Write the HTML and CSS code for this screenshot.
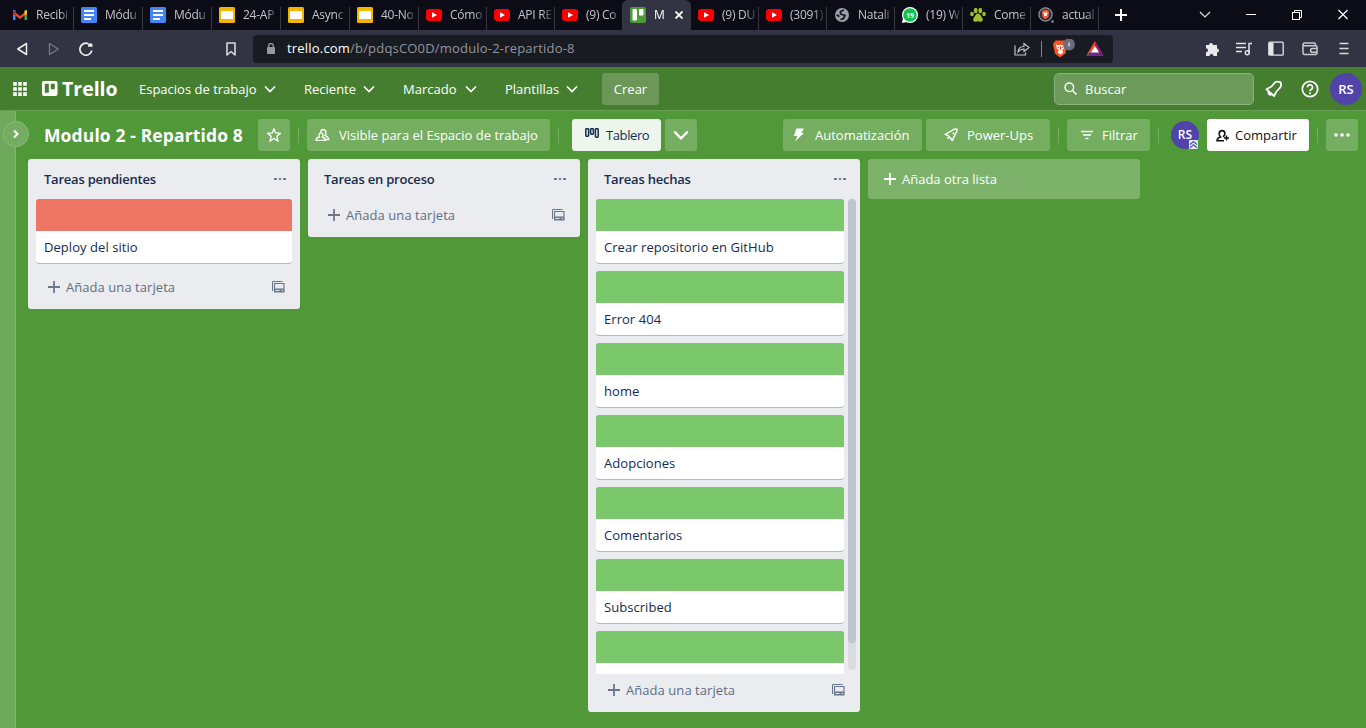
FILE: index.html
```html
<!DOCTYPE html>
<html lang="es">
<head>
<meta charset="utf-8">
<title>Modulo 2 - Repartido 8 | Trello</title>
<link rel="stylesheet" href="styles.css">
</head>
<body>
<svg class="defs" width="0" height="0">
  <symbol id="doc" viewBox="0 0 16 16"><rect width="16" height="16" rx="1.5" fill="#4285f4"/><path d="M3 4h10M3 8h10M3 12h7" stroke="#fff" stroke-width="1.8"/></symbol>
  <symbol id="slide" viewBox="0 0 16 16"><rect width="16" height="16" rx="1.5" fill="#f5b400"/><rect x="2" y="4" width="12" height="8" fill="#fff"/></symbol>
  <symbol id="yt" viewBox="0 0 16 16"><rect y="2" width="16" height="12" rx="3" fill="#f00"/><path d="M6 5.300v5.400L11 8z" fill="#fff"/></symbol>
  <symbol id="chev" viewBox="0 0 12 12"><path d="M1 3.500l5 5 5-5" fill="none" stroke="currentColor" stroke-width="1.7"/></symbol>
  <symbol id="plus" viewBox="0 0 12 12"><path d="M6 0v12M0 6h12" stroke="currentColor" stroke-width="1.8"/></symbol>
  <symbol id="template" viewBox="0 0 13 12"><path d="M.5 10V.5H10.500" fill="none" stroke="currentColor"/><path d="M2.500 2.500h9.500v8.500H2.500z" fill="none" stroke="currentColor" stroke-width="1.200"/><path d="M2.500 7.500h9.500v3.500h-9.500z" fill="currentColor"/><path d="M3.500 9.500h4M9.500 9.500h1.500" stroke="#ebecf0" stroke-width="1"/></symbol>
  <symbol id="rocket" viewBox="0 0 16 16"><path d="M1.300 7.200L9 3Q12 .8 14.700 1.300Q15.200 4 13 7L9.500 14.200L6.800 10.800L5.200 9z M10 5.500l1.500 1.500M6.300 9.800L3.800 12.200" fill="none" stroke="currentColor" stroke-width="1.700" stroke-linejoin="round"/></symbol>
</svg>

<div class="tabs">
  <div class="tab"><svg width="16" height="16" viewBox="0 0 16 16"><path d="M1 13V3h2.500v10z" fill="#4285f4"/><path d="M12.500 3H15v10h-2.500z" fill="#34a853"/><path d="M1 3.500l7 5.500 7-5.500v3.300L8 12 1 6.800z" fill="#ea4335"/><path d="M12.500 4.500L15 3v4l-2.500 1.500z" fill="#fbbc04"/><path d="M1 3l2.500 1.500v4L1 7z" fill="#c5221f"/></svg><span>Recibi</span></div>
  <div class="tab"><svg width="16" height="16"><use href="#doc"/></svg><span>Módu</span></div>
  <div class="tab"><svg width="16" height="16"><use href="#doc"/></svg><span>Módu</span></div>
  <div class="tab"><svg width="16" height="16"><use href="#slide"/></svg><span>24-AP</span></div>
  <div class="tab"><svg width="16" height="16"><use href="#slide"/></svg><span>Async</span></div>
  <div class="tab"><svg width="16" height="16"><use href="#slide"/></svg><span>40-No</span></div>
  <div class="tab narrow"><svg width="16" height="16"><use href="#yt"/></svg><span>Cómo</span></div>
  <div class="tab narrow"><svg width="16" height="16"><use href="#yt"/></svg><span>API RE</span></div>
  <div class="tab narrow last"><svg width="16" height="16"><use href="#yt"/></svg><span>(9) Co</span></div>
  <div class="tab active"><svg width="16" height="16" viewBox="0 0 16 16"><rect width="16" height="16" rx="2" fill="#519839"/><rect x="2.500" y="2" width="4.500" height="11.500" rx="1" fill="#fff"/><rect x="9" y="2" width="4.500" height="6.500" rx="1" fill="#fff"/></svg><span>M</span><svg class="close" width="8" height="8" viewBox="0 0 8 8"><path d="M.5.5l7 7M7.500.5l-7 7" stroke="#fff" stroke-width="1.800"/></svg></div>
  <div class="tab narrow"><svg width="16" height="16"><use href="#yt"/></svg><span>(9) DU</span></div>
  <div class="tab narrow"><svg width="16" height="16"><use href="#yt"/></svg><span>(3091)</span></div>
  <div class="tab narrow"><svg width="16" height="16" viewBox="0 0 16 16"><circle cx="8" cy="8" r="7" fill="#9aa0a6"/><path d="M10 3L6.500 4.500 6.500 7l4.500 1.500L9.500 11.500 6.500 12.500M2.500 8l3 1.500" fill="none" stroke="#11121c" stroke-width="1.700"/></svg><span>Natali</span></div>
  <div class="tab narrow"><svg width="16" height="16" viewBox="0 0 16 16"><circle cx="8" cy="8" r="8" fill="#fff"/><path d="M0 16l1-5 4 4z" fill="#fff"/><circle cx="8" cy="8" r="6.800" fill="#12c04c"/><text x="8" y="10.800" class="badge-text">19</text></svg><span>(19) W</span></div>
  <div class="tab narrow"><svg width="16" height="16" viewBox="0 0 16 16" fill="#a4bd2c"><path d="M8 6.500c2 0 2.500 2 4 4s1 4-1 4.300c-1 .2-2-.5-3-.5s-2 .7-3 .5c-2-.3-2.500-2.300-1-4.300s2-4 4-4z"/><ellipse cx="5.700" cy="3.500" rx="1.900" ry="2.700"/><ellipse cx="10.300" cy="3.500" rx="1.900" ry="2.700"/><ellipse cx="2" cy="7" rx="1.800" ry="2.300"/><ellipse cx="14" cy="7" rx="1.800" ry="2.300"/></svg><span>Come</span></div>
  <div class="tab narrow"><svg width="16" height="16" viewBox="0 0 16 16"><circle cx="7.500" cy="7.500" r="6.600" fill="#303039" stroke="#9599a2" stroke-width="1.200"/><path d="M3.800 5l1.700-2h4l1.700 2-.8 5-2.900 2.300L4.600 10z" fill="#f25a35"/><path d="M5.300 5.500h4.400L8.500 9h-2z" fill="#fff"/><circle cx="14.500" cy="14.500" r="1.200" fill="#9599a2"/></svg><span>actual</span></div>
  <svg class="newtab" width="12" height="12" viewBox="0 0 12 12"><path d="M6 0v12M0 6h12" stroke="#fff" stroke-width="2"/></svg>
  <div class="window-controls">
    <svg width="12" height="12" viewBox="0 0 12 12"><path d="M1 3l5 5 5-5" fill="none" stroke="#ddd" stroke-width="1.200"/></svg>
    <svg width="12" height="12" viewBox="0 0 12 12"><path d="M1 5.500h10" stroke="#fff"/></svg>
    <svg width="12" height="12" viewBox="0 0 12 12" fill="none" stroke="#fff"><rect x="1.500" y="3.500" width="7" height="7"/><path d="M3.500 3.500v-2h7v7h-2"/></svg>
    <svg width="12" height="12" viewBox="0 0 12 12"><path d="M1.500 1l9 9M10.500 1l-9 9" stroke="#fff" stroke-width="1.200"/></svg>
  </div>
</div>

<div class="toolbar">
  <svg width="12" height="14" viewBox="0 0 12 14"><path d="M9.500 1.500v11L.8 7z" fill="none" stroke="#eee" stroke-width="1.500" stroke-linejoin="round"/></svg>
  <svg class="forward" width="12" height="14" viewBox="0 0 12 14"><path d="M1.500 1.500v11L10.200 7z" fill="none" stroke="#777984" stroke-width="1.300" stroke-linejoin="round"/></svg>
  <svg class="reload" width="14" height="14" viewBox="0 0 14 14"><path d="M9.500 1.800A6 6 0 1 0 12.800 8.500" fill="none" stroke="#eee" stroke-width="1.700"/><path d="M8.500 4.500a2.300 2.300 0 1 1 4.600 0v1.300H8.500z" fill="#eee" transform="translate(.5 -1)"/></svg>
  <svg class="bookmark" width="12" height="14" viewBox="0 0 12 14"><path d="M2 1h8v12L6 9.500 2 13z" fill="none" stroke="#d8d9dd" stroke-width="1.600" stroke-linejoin="round"/></svg>
  <div class="address">
    <svg width="10" height="12" viewBox="0 0 10 12"><rect x="0" y="4" width="8" height="7" rx="1" fill="#9498a2"/><path d="M1.700 4.500V2.800a2.300 2.300 0 0 1 4.600 0v1.700" fill="none" stroke="#9498a2" stroke-width="1.300"/></svg>
    <span class="url"><b>trello.com</b>/b/pdqsCO0D/modulo-2-repartido-8</span>
    <svg class="share" width="16" height="14" viewBox="0 0 16 14"><path d="M1 3.500v9.500h10.500V10.500" fill="none" stroke="#c3c5ca" stroke-width="1.200"/><path d="M4 10c.3-4 2.500-5.500 6-5.500V1.500L15 5.500l-5 4V7C7.500 7 5.500 8 4 10z" fill="none" stroke="#c3c5ca" stroke-width="1.200"/></svg>
    <i></i>
    <svg class="brave" width="22" height="20" viewBox="0 0 22 20"><path d="M0 5l2.500-3.500h9L14 5l-1.500 9.500L7 18.500l-5-4z" fill="#fb5420"/><path d="M3 5.500l3 1 1.500-1 1.500 1 2.500-1-.8 4-1.500 1.500 1 2.500-2.700 2-2.700-2 1-2.500L3.800 9.500z" fill="#fff"/><path d="M4.500 8l2 1M10.500 8l-2 1M7.500 7v4" stroke="#fb5420"/><circle cx="16" cy="5.500" r="6" fill="#686d7c"/><path d="M16 3.500v4" stroke="#fff"/></svg>
    <svg class="bat" width="18" height="16" viewBox="0 0 18 16"><path d="M9 0l9 15-9-8z" fill="#9e1f63"/><path d="M0 15h18l-5-4H5z" fill="#662d91"/><path d="M0 15L9 0v5.500L5 11z" fill="#ff4724"/><path d="M9 5l4.200 6.500H4.800z" fill="#fff"/></svg>
  </div>
  <div class="extensions">
    <svg width="16" height="16" viewBox="0 0 16 16"><path d="M2 4h3a2 2 0 1 1 4 0h4v3.500a2 2 0 1 1 0 4V15H9.500a2 2 0 1 0-4 0H2v-3.800a2 2 0 1 0 0-4z" fill="#e9e9ec"/></svg>
    <svg width="16" height="16" viewBox="0 0 16 16"><path d="M0 2.500h10M0 6.500h10M0 10.500h6M13 12V2.500h3" fill="none" stroke="#e3e4e7" stroke-width="1.500"/><circle cx="11.300" cy="11.700" r="2" fill="none" stroke="#e3e4e7" stroke-width="1.400"/></svg>
    <svg width="16" height="16" viewBox="0 0 16 16"><rect x=".8" y="1.200" width="14.400" height="13" rx="1" fill="none" stroke="#e3e4e7" stroke-width="1.300"/><path d="M1 1.500h4.500v12.500H1z" fill="#e3e4e7"/></svg>
    <svg width="16" height="16" viewBox="0 0 16 16" fill="none" stroke="#c9cad0" stroke-width="1.500"><path d="M13.500 4.800V3.500a1.500 1.500 0 0 0-1.500-1.500H2.500a1.400 1.400 0 0 0 0 2.800H13.500a1.500 1.500 0 0 1 1.500 1.500v5.700a1.500 1.500 0 0 1-1.500 1.500H2.500A1.500 1.500 0 0 1 1 12V3.500"/><path d="M15 7.500h-4.500a1.900 1.900 0 0 0 0 3.800H15"/></svg>
    <svg width="16" height="16" viewBox="0 0 16 16"><path d="M3.500 2.500h9M3.500 7.500h9M3.500 12.500h9" stroke="#d9dade" stroke-width="1.600"/></svg>
  </div>
</div>

<header class="header">
  <svg class="apps" width="14" height="14" viewBox="0 0 14 14"><path d="M2 0v14M7 0v14M12 0v14" stroke="#fff" stroke-width="3.600" stroke-dasharray="3.700 1.450"/></svg>
  <div class="logo"><svg width="16" height="15" viewBox="0 0 16 15"><path fill="#fff" fill-rule="evenodd" d="M2 0h11.500a2 2 0 0 1 2 2v11a2 2 0 0 1-2 2H2a2 2 0 0 1-2-2V2a2 2 0 0 1 2-2zM2.800 2.800v9h4v-9zM8.800 2.800v5.500h4V2.800z"/></svg><span>Trello</span></div>
  <nav>
    <a class="n1">Espacios de trabajo<svg width="12" height="12"><use href="#chev"/></svg></a>
    <a class="n2">Reciente<svg width="12" height="12"><use href="#chev"/></svg></a>
    <a class="n3">Marcado<svg width="12" height="12"><use href="#chev"/></svg></a>
    <a class="n4">Plantillas<svg width="12" height="12"><use href="#chev"/></svg></a>
  </nav>
  <button class="create">Crear</button>
  <div class="search"><svg width="13" height="13" viewBox="0 0 13 13"><circle cx="5.300" cy="5.300" r="4.300" fill="none" stroke="#fff" stroke-width="1.400"/><path d="M8.500 8.500l4 4" stroke="#fff" stroke-width="1.500"/></svg><span>Buscar</span></div>
  <svg class="bell" width="18" height="18" viewBox="0 0 18 18"><path d="M1.500 9.300L6.500 6.500 10 2.500Q12 1 15.500 2.200Q17 6 14.800 8L11.500 11.500 9 16zM1.500 9.300L9 16M3.600 12a2 2 0 0 0 2.600 2.600" fill="none" stroke="#fff" stroke-width="1.800" stroke-linejoin="round"/></svg>
  <svg class="help" width="18" height="18" viewBox="0 0 18 18"><circle cx="9" cy="9" r="7.700" fill="none" stroke="#fff" stroke-width="1.700"/><path d="M6.500 7.300a2.500 2.500 0 1 1 3.700 2.200Q9 10.100 9 11.200" fill="none" stroke="#fff" stroke-width="1.600"/><circle cx="9" cy="13.200" r="1.050" fill="#fff"/></svg>
  <div class="avatar">RS</div>
</header>

<main class="board">
  <aside><button><svg width="6" height="8" viewBox="0 0 6 8"><path d="M1 .5L4.500 4 1 7.500" fill="none" stroke="#fff" stroke-width="2"/></svg></button></aside>
  <section class="content">
    <div class="board-bar">
      <h1>Modulo 2 - Repartido 8</h1>
      <button class="btn star"><svg width="14" height="14" viewBox="0 0 14 14"><path d="M7 1l1.700 3.900 4.700.4-3.500 3 1 4.700L7 10.500 3.100 13l1-4.700-3.500-3 4.700-.4z" fill="none" stroke="#fff" stroke-width="1.300"/></svg></button>
      <i class="divider d1"></i>
      <button class="btn visible"><svg width="15" height="14" viewBox="0 0 15 14" fill="none" stroke="#fff" stroke-width="1.300"><path d="M1 12.400Q1 9.500 4.500 9 3.500 7 4.500 5.700 6 4 7.700 5.700 8.500 7.500 7.300 9 10.300 9.600 10.500 12.400z"/><path d="M5.500 4.500Q5.800 1.500 8.200 1.500T11 4.700Q11 6.300 10 7.300 13.400 8.600 13.800 11.500H10.500"/></svg><span>Visible para el Espacio de trabajo</span></button>
      <i class="divider d2"></i>
      <button class="btn view"><svg width="14" height="10" viewBox="0 0 14 10" fill="none" stroke="#172b4d" stroke-width="1.500"><rect x=".8" y=".8" width="2.800" height="7.400" rx=".7"/><rect x="5.600" y=".8" width="2.800" height="5.400" rx=".7"/><rect x="10.400" y=".8" width="2.800" height="8.400" rx=".7"/></svg><span>Tablero</span></button>
      <button class="btn more-view"><svg width="16" height="16"><use href="#chev"/></svg></button>
      <button class="btn auto"><svg width="12" height="14" viewBox="0 0 12 14"><path d="M3.500.5h7.500L8.500 5h2.500L2 13.500 4.500 8H.8z" fill="#fff"/></svg><span>Automatización</span></button>
      <button class="btn power"><svg width="14" height="14"><use href="#rocket"/></svg><span>Power-Ups</span></button>
      <i class="divider"></i>
      <button class="btn filter"><svg width="12" height="10" viewBox="0 0 12 10"><path d="M0 1.500h12M2 5h8M4.500 8.500h3" stroke="#fff" stroke-width="1.500"/></svg><span>Filtrar</span></button>
      <i class="divider"></i>
      <div class="member">RS<svg width="9" height="9" viewBox="0 0 9 9"><rect width="9" height="9" rx="1" fill="#e9eafc"/><path d="M1 4.500L4.500 1.500 8 4.500M1 7.800l3.500-3 3.500 3" fill="none" stroke="#3e57a8" stroke-width="1.200"/></svg></div>
      <button class="btn invite"><svg width="14" height="13" viewBox="0 0 14 13"><path d="M8 11.700H1Q1.300 8.500 4.500 8 2.800 6 3.200 4A2.900 2.900 0 0 1 8.900 4Q9 6.500 7 7.800" fill="none" stroke="#111" stroke-width="1.600"/><path d="M10.500 6.500v5M8 9h5" stroke="#111" stroke-width="1.500"/></svg><span>Compartir</span></button>
      <i class="divider"></i>
      <button class="btn dots"><svg width="16" height="4" viewBox="0 0 16 4" fill="#fff"><circle cx="2" cy="2" r="1.800"/><circle cx="8" cy="2" r="1.800"/><circle cx="14" cy="2" r="1.800"/></svg></button>
    </div>
    <div class="lists">
      <article class="list">
        <h2>Tareas pendientes<b></b></h2>
        <div class="cards"><div class="card red"><p>Deploy del sitio</p></div></div>
        <footer><svg class="plus" width="12" height="12"><use href="#plus"/></svg><span>Añada una tarjeta</span><svg width="13" height="12"><use href="#template"/></svg></footer>
      </article>
      <article class="list">
        <h2>Tareas en proceso<b></b></h2>
        <footer><svg class="plus" width="12" height="12"><use href="#plus"/></svg><span>Añada una tarjeta</span><svg width="13" height="12"><use href="#template"/></svg></footer>
      </article>
      <article class="list done">
        <h2>Tareas hechas<b></b></h2>
        <div class="scroller">
          <div class="cards">
            <div class="card"><p>Crear repositorio en GitHub</p></div>
            <div class="card"><p>Error 404</p></div>
            <div class="card"><p>home</p></div>
            <div class="card"><p>Adopciones</p></div>
            <div class="card"><p>Comentarios</p></div>
            <div class="card"><p>Subscribed</p></div>
            <div class="card"><p></p></div>
          </div>
          <div class="track"><div class="thumb"></div></div>
        </div>
        <footer><svg class="plus" width="12" height="12"><use href="#plus"/></svg><span>Añada una tarjeta</span><svg width="13" height="12"><use href="#template"/></svg></footer>
      </article>
      <button class="add-list"><svg width="12" height="12"><use href="#plus"/></svg><span>Añada otra lista</span></button>
    </div>
  </section>
</main>
</body>
</html>
```
FILE: styles.css
```css
* { box-sizing: border-box; }
body { margin: 0; height: 728px; overflow: hidden; display: flex; flex-direction: column; font: 13px/20px "Open Sans", "Noto Sans", sans-serif; color: #172b4d; background: #519839; }
svg { flex: none; display: block; }
.defs { position: absolute; }
button { font: inherit; color: inherit; border: 0; padding: 0; background: none; }
h1, h2, p { margin: 0; }
span { white-space: nowrap; }

.tabs { height: 30px; flex: none; display: flex; align-items: stretch; background: #0c0c17; padding-left: 4px; }
.tab { width: 69px; flex: none; display: flex; align-items: center; gap: 8px; padding: 0 1px 0 7px; color: #c4c4c8; font-size: 12px; letter-spacing: -0.25px; background: linear-gradient(#38383d, #38383d) right 7px / 1px 23px no-repeat; }
.tab:first-child { width: 70px; padding-left: 8px; }
.tab span { flex: 1; min-width: 0; overflow: hidden; -webkit-mask-image: linear-gradient(90deg, #000 24px, transparent 36px); mask-image: linear-gradient(90deg, #000 24px, transparent 36px); }
.tab.narrow { width: 68px; }
.tab.last { background-image: none; width: 67px; }
.tab.active { width: 69px; background: #323443; border-radius: 6px 6px 0 0; color: #fff; padding: 0 7px 0 8px; }
.close { margin-right: 1px; }
.badge-text { font: bold 7px "Open Sans", sans-serif; letter-spacing: 0; fill: #fff; text-anchor: middle; }
.newtab { align-self: center; margin-left: 16px; }
.window-controls { margin-left: auto; margin-right: 17px; display: flex; align-items: center; gap: 34px; }

.toolbar { height: 37px; flex: none; background: #323443; display: flex; align-items: center; padding-left: 17px; }
.forward { margin-left: 19px; }
.reload { margin-left: 19px; }
.bookmark { margin-left: 132px; }
.address { width: 860px; height: 28px; margin-left: 16px; border-radius: 4px; background: #191b23; display: flex; align-items: center; padding-left: 14px; flex: none; }
.url { margin-left: 10px; color: #94959a; letter-spacing: 0.19px; padding-bottom: 1px; }
.url b { font-weight: 400; color: #fff; }
.share { margin-left: auto; }
.address i { width: 1px; height: 16px; background: #85868c; margin: 0 11px 0 11px; }
.bat { margin: 0 9px 0 11px; }
.extensions { margin: 0 14px 0 auto; display: flex; gap: 16px; }
.extensions svg:nth-child(4) { margin-left: 2px; }
.extensions svg:nth-child(5) { margin-left: 2px; }

.header { height: 43px; flex: none; background: #467e30; color: #fff; display: flex; align-items: center; padding: 0 5px 0 13px; }
.logo { display: flex; align-items: center; gap: 4px; margin-left: 15px; width: 97px; font: bold 19.5px/24px "Open Sans", sans-serif; }
nav { display: flex; }
nav a { display: flex; align-items: center; justify-content: space-between; white-space: nowrap; }
.n1 { width: 137px; margin-right: 28px; }
.n2 { width: 71px; margin-right: 28px; }
.n3 { width: 74px; margin-right: 28px; }
.n4 { width: 73px; margin-right: 24px; }
.create { width: 57px; height: 32px; border-radius: 3px; background: #6b9859; }
.search { margin-left: auto; width: 200px; height: 32px; border: 1px solid #8cb07f; border-radius: 5px; background: #6b9a5a; display: flex; align-items: center; gap: 8px; padding-left: 9px; }
.bell { margin-left: 11px; }
.help { margin-left: 18px; }
.avatar { width: 32px; height: 32px; border-radius: 50%; background: #5243aa; display: grid; place-items: center; font-size: 13px; font-weight: 600; margin: 0 -1px 0 11px; }

.board { flex: 1; display: flex; min-height: 0; border-top: 1px solid #689f52; }
aside { width: 16px; flex: none; background: #6fa95b; border-right: 1px solid #86b775; }
aside button { position: relative; left: 3px; top: 10px; width: 26px; height: 26px; border: 1px solid #8bba7c; border-radius: 50%; background: #74ad61; display: grid; place-items: center; }
.content { flex: 1; display: flex; flex-direction: column; min-width: 0; }
.board-bar { height: 48px; flex: none; display: flex; align-items: center; padding: 0 8px 0 28px; color: #fff; }
h1 { width: 214px; font-size: 17.5px; letter-spacing: 0.12px; line-height: 24px; white-space: nowrap; }
.btn { height: 32px; border-radius: 3px; background: #75ad61; display: flex; align-items: center; flex: none; }
.divider { width: 1px; height: 16px; background: #75ad61; margin: 0 8px; }
.divider.d2 { margin-right: 13px; }
.star, .more-view, .dots { width: 32px; justify-content: center; }
.visible { width: 243px; padding-left: 8px; gap: 9px; }
.view { width: 89px; padding-left: 13px; gap: 7px; background: #eef5ec; color: #172b4d; letter-spacing: -0.4px; }
.view svg { margin-bottom: 4px; }
.more-view { margin-left: 4px; }
.auto { width: 139px; margin-left: auto; padding-left: 10px; gap: 10px; }
.power { width: 124px; margin-left: 4px; padding-left: 18px; gap: 9px; }
.filter { width: 83px; padding-left: 14px; gap: 9px; }
.member { position: relative; width: 28px; height: 28px; margin: 0 8px 0 4px; border-radius: 50%; background: #5243aa; display: grid; place-items: center; font-size: 12px; font-weight: 600; flex: none; }
.member svg { position: absolute; right: 1px; bottom: 0; }
.invite { width: 102px; padding-left: 9px; gap: 5px; background: #fff; color: #111; }

.lists { display: flex; align-items: flex-start; gap: 8px; padding-left: 12px; }
.list { width: 272px; border-radius: 3px; background: #ebecf0; flex: none; }
h2 { height: 40px; display: flex; align-items: center; justify-content: space-between; padding: 0 14px 0 16px; font-size: 13px; font-weight: 600; letter-spacing: -0.22px; }
h2 b { width: 12px; height: 2px; background: linear-gradient(90deg, #6b778c 3px, transparent 3px 5px, #6b778c 5px 7px, transparent 7px 9px, #6b778c 9px); }
.cards { padding: 0 8px; display: flex; flex-direction: column; gap: 8px; }
.card { height: 64px; border-radius: 3px; background: #fff; border-top: 32px solid #7bc86c; box-shadow: 0 1px 0 #b3bac5; padding: 6px 8px; flex: none; letter-spacing: 0.05px; }
.card.red { border-top-color: #ef7564; }
footer { height: 38px; display: flex; align-items: flex-start; padding: 6px 15px 0 20px; color: #5e6c84; letter-spacing: 0.06px; }
.cards + footer { height: 46px; padding-top: 14px; }
footer span { flex: 1; margin-left: 6px; }
footer svg { margin-top: 4px; color: #6b778c; }
.scroller { height: 475px; display: flex; overflow: hidden; }
.scroller .cards { width: 256px; padding-right: 0; }
.track { width: 8px; height: 471px; margin-left: 4px; border-radius: 4px; background: #dadbe2; }
.thumb { height: 444px; border-radius: 4px; background: #bfc4ce; }
.add-list { width: 272px; height: 40px; border-radius: 3px; background: #7db26b; color: #fff; display: flex; align-items: center; gap: 6px; padding-left: 16px; }
```
